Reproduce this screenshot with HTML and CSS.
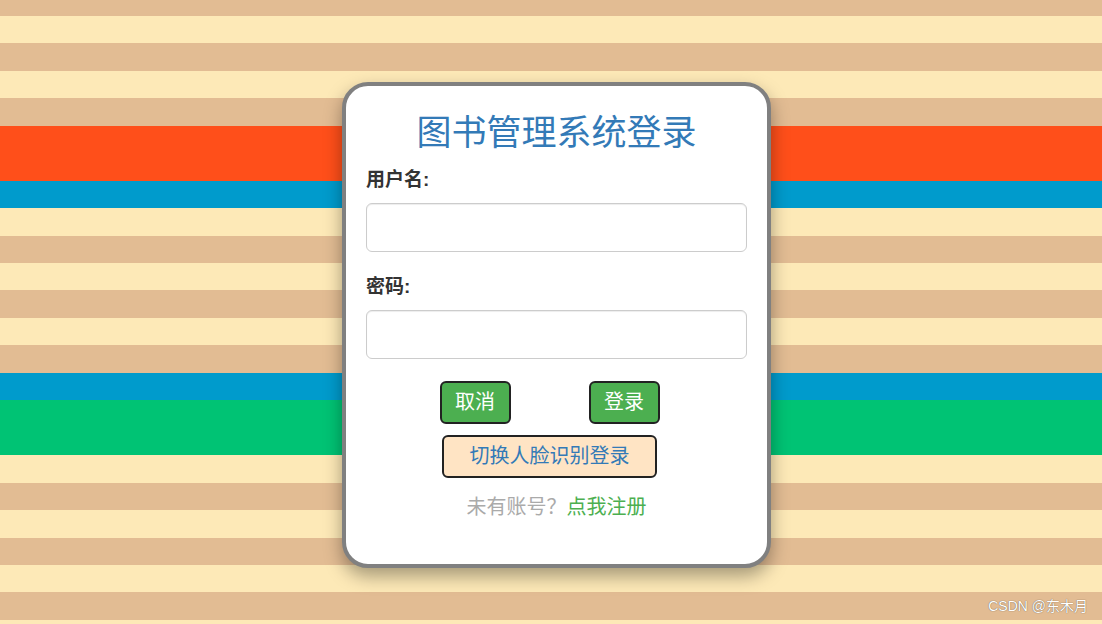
FILE: index.html
```html
<!DOCTYPE html>
<html lang="zh-CN">
  <head>
    <meta charset="UTF-8" />
    <meta name="viewport" content="width=device-width, initial-scale=1.0" />
    <title>图书管理系统登录</title>
    <link rel="stylesheet" href="styles.css">
  </head>
  <body>
    <div class="login-box">
      <h1 class="title">图书管理系统登录</h1>
      <form class="login-form">
        <div class="form-group">
          <label for="username">用户名:</label>
          <input type="text" id="username" class="form-control" />
        </div>
        <div class="form-group">
          <label for="password">密码:</label>
          <input type="password" id="password" class="form-control" />
        </div>
        <div class="actions">
          <div class="btn-row">
            <button type="button" class="btn btn-green">取消</button>
            <button type="button" class="btn btn-green">登录</button>
          </div>
          <div class="btn-row">
            <button type="button" class="btn btn-face">切换人脸识别登录</button>
          </div>
        </div>
        <p class="register">未有账号？<a href="#">点我注册</a></p>
      </form>
    </div>
    <div class="watermark">CSDN @东木月</div>
  </body>
</html>
```

FILE: styles.css
```css
* {
  margin: 0;
  padding: 0;
  box-sizing: border-box;
  font-family: "Liberation Sans", "Noto Sans CJK SC", sans-serif;
}
html,
body {
  height: 100%;
}
body {
  display: flex;
  justify-content: center;
  align-items: flex-start;
  overflow: hidden;
  background: linear-gradient(
    to bottom,
    #e2bc93 0px, #e2bc93 16px,
    #fde9b7 16px, #fde9b7 43.5px,
    #e2bc93 43.5px, #e2bc93 71px,
    #fde9b7 71px, #fde9b7 98.5px,
    #e2bc93 98.5px, #e2bc93 125.8px,
    #ff4f1a 125.8px, #ff4f1a 180.7px,
    #009bcc 180.7px, #009bcc 208.2px,
    #fde9b7 208.2px, #fde9b7 235.6px,
    #e2bc93 235.6px, #e2bc93 263px,
    #fde9b7 263px, #fde9b7 290.5px,
    #e2bc93 290.5px, #e2bc93 318px,
    #fde9b7 318px, #fde9b7 345.4px,
    #e2bc93 345.4px, #e2bc93 372.9px,
    #009bcc 372.9px, #009bcc 400.3px,
    #00c374 400.3px, #00c374 455.2px,
    #fde9b7 455.2px, #fde9b7 482.7px,
    #e2bc93 482.7px, #e2bc93 510.1px,
    #fde9b7 510.1px, #fde9b7 537.6px,
    #e2bc93 537.6px, #e2bc93 565px,
    #fde9b7 565px, #fde9b7 592.5px,
    #e2bc93 592.5px, #e2bc93 620px,
    #fde9b7 620px, #fde9b7 100%
  );
}
.login-box {
  width: 429px;
  margin-top: 82px;
  margin-left: 11px;
  padding: 0 20px 43px;
  background: #fff;
  border: 4px solid #808080;
  border-radius: 26px;
  box-shadow: 0 8px 18px rgba(0, 0, 0, 0.35);
}
.title {
  margin-top: 27px;
  font-size: 35px;
  line-height: 40px;
  font-weight: normal;
  text-align: center;
  color: #337ab7;
}
.form-group {
  margin-top: 14px;
}
.form-group + .form-group {
  margin-top: 22px;
}
.form-group label {
  display: block;
  margin-bottom: 10px;
  font-size: 19px;
  line-height: 26px;
  font-weight: bold;
  color: #333;
}
.form-control {
  display: block;
  width: 100%;
  height: 49px;
  padding: 10px 16px;
  font-size: 18px;
  border: 1px solid #ccc;
  border-radius: 6px;
  box-shadow: inset 0 1px 1px rgba(0, 0, 0, 0.075);
  outline: none;
}
.actions {
  margin-top: 22px;
  padding-right: 14px;
}
.btn-row {
  display: flex;
  justify-content: center;
  gap: 78px;
}
.btn-row + .btn-row {
  margin-top: 11px;
}
.btn {
  height: 43px;
  font-size: 20px;
  line-height: 39px;
  border: 2px solid #222;
  border-radius: 6px;
  cursor: pointer;
}
.btn-green {
  width: 71px;
  background: #4caf50;
  color: #fff;
}
.btn-face {
  width: 215px;
  background: #ffe4c4;
  color: #337ab7;
}
.register {
  margin-top: 15px;
  font-size: 20px;
  line-height: 28px;
  text-align: center;
  color: #aaa;
}
.register a {
  color: #4caf50;
  text-decoration: none;
}
.watermark {
  position: absolute;
  right: 14px;
  bottom: 9px;
  font-size: 14px;
  color: #fff;
  text-shadow: 0 0 1px rgba(0, 0, 0, 0.7);
}
```
